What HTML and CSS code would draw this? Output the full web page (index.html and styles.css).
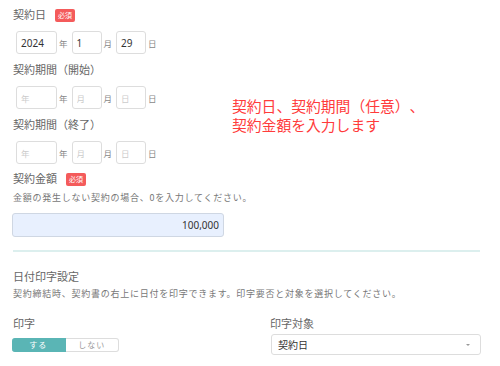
FILE: index.html
```html
<!DOCTYPE html>
<html lang="ja">
<head>
    <meta charset="UTF-8">
    <meta name="viewport" content="width=device-width, initial-scale=1.0">
    <title>契約情報</title>
    <link rel="stylesheet" href="styles.css">
</head>
<body>
<div class="page">
    <p class="note">契約日、契約期間（任意）、<br>契約金額を入力します</p>

    <div class="label first">契約日 <span class="badge">必須</span></div>
    <div class="date-row">
        <input class="box box-year" type="text" value="2024"><span class="unit">年</span>
        <input class="box" type="text" value="1"><span class="unit">月</span>
        <input class="box" type="text" value="29"><span class="unit">日</span>
    </div>

    <div class="label">契約期間（開始）</div>
    <div class="date-row">
        <input class="box box-year" type="text" placeholder="年"><span class="unit">年</span>
        <input class="box" type="text" placeholder="月"><span class="unit">月</span>
        <input class="box" type="text" placeholder="日"><span class="unit">日</span>
    </div>

    <div class="label">契約期間（終了）</div>
    <div class="date-row row-last">
        <input class="box box-year" type="text" placeholder="年"><span class="unit">年</span>
        <input class="box" type="text" placeholder="月"><span class="unit">月</span>
        <input class="box" type="text" placeholder="日"><span class="unit">日</span>
    </div>

    <div class="label">契約金額 <span class="badge">必須</span></div>
    <p class="hint">金額の発生しない契約の場合、0を入力してください。</p>
    <input class="amount" type="text" value="100,000">

    <hr class="divider">

    <div class="section-title">日付印字設定</div>
    <p class="hint">契約締結時、契約書の右上に日付を印字できます。印字要否と対象を選択してください。</p>

    <div class="print-grid">
        <div>
            <div class="label">印字</div>
            <div class="toggle">
                <span class="toggle-item active">する</span>
                <span class="toggle-item">しない</span>
            </div>
        </div>
        <div>
            <div class="label">印字対象</div>
            <div class="select">
                <span>契約日</span>
                <span class="caret"></span>
            </div>
        </div>
    </div>
</div>
</body>
</html>
```

FILE: styles.css
```css
/* General page styling */
body {
    margin: 0;
    padding: 0;
    background-color: #fff;
    font-family: 'Noto Sans CJK JP', 'Noto Sans', sans-serif;
    color: #666;
    text-spacing-trim: space-all;
}

.page {
    position: relative;
    padding: 7px 19px 0 13px;
}

/* red annotation laid over the form */
.note {
    position: absolute;
    left: 232px;
    top: 96px;
    margin: 0;
    font-size: 14.8px;
    line-height: 19px;
    color: #ff3b3b;
}

.label {
    display: flex;
    align-items: center;
    font-size: 11px;
    line-height: 15px;
    margin-top: 7px;
}

.label.first {
    margin-top: 0;
}

.badge {
    display: inline-block;
    margin-left: 9px;
    padding: 0 3px;
    height: 13px;
    line-height: 13px;
    font-size: 7px;
    color: white;
    background-color: #f45b5b;
    border-radius: 2px;
    margin-top: 2px;
}

/* date inputs */
.date-row {
    display: flex;
    align-items: center;
    margin-top: 9px;
    margin-bottom: 8px;
    padding-left: 3px;
}

.date-row.row-last {
    margin-bottom: 7px;
}

.box {
    box-sizing: border-box;
    width: 30px;
    height: 23px;
    padding: 0 4px;
    border: 1px solid #ddd;
    border-radius: 3px;
    font-family: 'Noto Sans', sans-serif;
    font-size: 10px;
    color: #333;
    outline: none;
}

.box-year {
    width: 41px;
}

.box::placeholder {
    color: #ccc;
    font-family: 'Noto Sans CJK JP', sans-serif;
    font-size: 8.5px;
}

.unit {
    font-size: 8.5px;
    color: #888;
    margin: 0 4px 0 2px;
}

.hint {
    margin: 5px 0 0;
    font-size: 9px;
    line-height: 13px;
    letter-spacing: 0.75px;
    color: #777;
}

.amount {
    display: block;
    box-sizing: border-box;
    width: 212px;
    height: 24px;
    margin: 9px 0 0 -1px;
    padding: 0 4px;
    text-align: right;
    font-family: 'Noto Sans', sans-serif;
    font-size: 10px;
    color: #333;
    background-color: #e8f0fe;
    border: 1px solid #cfd7e3;
    border-radius: 3px;
    outline: none;
}

.divider {
    margin: 13px 1px 0 0;
    border: none;
    height: 2px;
    background-color: #dcefee;
}

.section-title {
    margin-top: 17px;
    font-size: 11px;
    line-height: 15px;
}

.section-title + .hint {
    margin-top: 3px;
}

/* print settings */
.print-grid {
    display: grid;
    grid-template-columns: 257px 1fr;
    margin-top: 16px;
}

.print-grid .label {
    margin-top: 0;
}

.toggle {
    display: flex;
    width: 107px;
    height: 14px;
    margin: 7px 0 0 -1px;
}

.toggle-item {
    flex: 1;
    text-align: center;
    font-size: 8px;
    line-height: 12px;
    letter-spacing: 1px;
    color: #999;
    border: 1px solid #ddd;
    border-left: none;
    border-radius: 0 3px 3px 0;
}

.toggle-item.active {
    color: white;
    background-color: #5ab5b5;
    border-color: #5ab5b5;
    border-radius: 3px 0 0 3px;
}

.select {
    box-sizing: border-box;
    display: flex;
    align-items: center;
    justify-content: space-between;
    height: 21px;
    margin: 3px 0 0 1px;
    padding: 0 10px 0 6px;
    border: 1px solid #ddd;
    border-radius: 3px;
    font-size: 10px;
    color: #333;
}

.caret {
    width: 0;
    height: 0;
    border-left: 2px solid transparent;
    border-right: 2px solid transparent;
    border-top: 2px solid #999;
}
```
